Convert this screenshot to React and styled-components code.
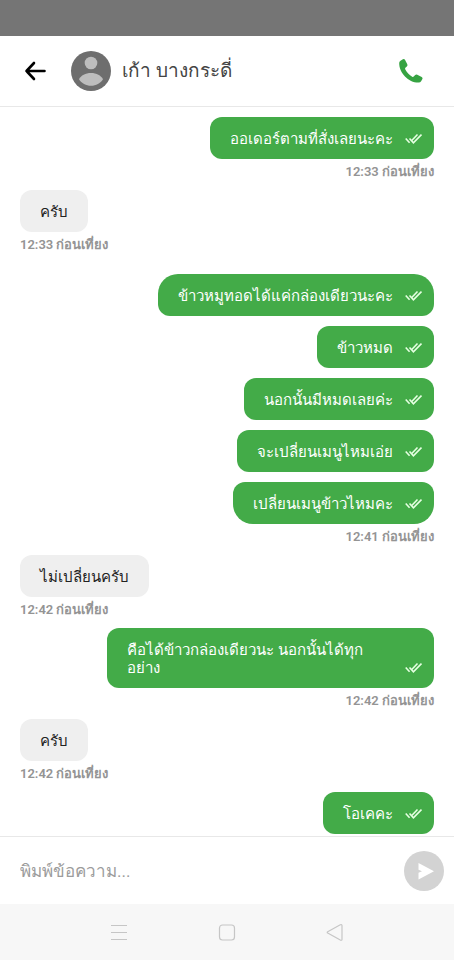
import React from "react";
import styled, { createGlobalStyle } from "styled-components";

const GlobalStyle = createGlobalStyle`
  * { box-sizing: border-box; }
  body { margin: 0; background: #fff; }
  button, input { font: inherit; }
`;

const Screen = styled.div`
  display: flex;
  flex-direction: column;
  min-height: 100vh;
  background: #fff;
  font-family: Roboto, "Liberation Sans", sans-serif;
`;

const StatusBar = styled.div`
  height: 36px;
  background: #757575;
`;

const Header = styled.header`
  display: flex;
  align-items: center;
  height: 71px;
  padding: 0 28px 0 20px;
  border-bottom: 1px solid #e8e8e8;
`;

const IconButton = styled.button`
  display: grid;
  place-items: center;
  padding: 0;
  border: 0;
  background: none;
  color: ${(p) => p.$color};
`;

const Avatar = styled.svg`
  width: 40px;
  height: 40px;
  margin: 0 11px 0 21px;
`;

const Name = styled.h1`
  flex: 1;
  margin: 0;
  font-size: 19px;
  line-height: 30px;
  font-weight: 400;
  color: #444;
`;

const Messages = styled.main`
  flex: 1;
  display: flex;
  flex-direction: column;
  gap: 10px;
  padding: 10px 20px 2px;
`;

const Message = styled.article`
  display: flex;
  flex-direction: column;
  align-items: ${(p) => (p.$mine ? "flex-end" : "flex-start")};
  margin-bottom: ${(p) => (p.$spaced ? 11 : 0)}px;
`;

const radii = {
  single: "12px",
  first: "20px 20px 12px 12px",
  last: "12px 12px 20px 20px",
};

const Bubble = styled.div`
  display: flex;
  align-items: flex-end;
  gap: 12px;
  max-width: 79%;
  padding: 13px ${(p) => (p.$mine ? 12 : 20)}px 11px 20px;
  border-radius: ${(p) => radii[p.$shape]};
  background: ${(p) => (p.$mine ? "#43ab48" : "#efefef")};
  color: ${(p) => (p.$mine ? "#fff" : "#222")};
`;

const Text = styled.p`
  margin: 0;
  font-size: 15px;
  line-height: 18px;
`;

const Ticks = styled.svg`
  flex: none;
  width: 17px;
  height: 17px;
`;

const Time = styled.time`
  height: 21px;
  padding-top: 4px;
  font-size: 13px;
  line-height: 17px;
  font-weight: 600;
  color: #949494;
`;

const Composer = styled.form`
  display: flex;
  align-items: center;
  gap: 12px;
  height: 68px;
  padding: 0 10px 0 20px;
  border-top: 1px solid #e8e8e8;
`;

const Field = styled.input`
  flex: 1;
  min-width: 0;
  height: 40px;
  padding: 0;
  border: 0;
  outline: 0;
  background: none;
  font-size: 17px;
  color: #222;
  &::placeholder { color: #9c9c9c; opacity: 1; }
`;

const Send = styled(IconButton)`
  width: 40px;
  height: 40px;
  border-radius: 50%;
  background: #d3d3d3;
`;

const SystemNav = styled.nav`
  display: flex;
  align-items: center;
  justify-content: center;
  gap: 84px;
  height: 56px;
  background: #f7f7f7;
`;

const messages = [
  { mine: true, text: "ออเดอร์ตามที่สั่งเลยนะคะ", time: "12:33 ก่อนเที่ยง" },
  { text: "ครับ", time: "12:33 ก่อนเที่ยง", spaced: true },
  { mine: true, text: "ข้าวหมูทอดได้แค่กล่องเดียวนะคะ", shape: "first" },
  { mine: true, text: "ข้าวหมด" },
  { mine: true, text: "นอกนั้นมีหมดเลยค่ะ" },
  { mine: true, text: "จะเปลี่ยนเมนูไหมเอ่ย" },
  { mine: true, text: "เปลี่ยนเมนูข้าวไหมคะ", time: "12:41 ก่อนเที่ยง", shape: "last" },
  { text: "ไม่เปลี่ยนครับ", time: "12:42 ก่อนเที่ยง" },
  { mine: true, text: "คือได้ข้าวกล่องเดียวนะ นอกนั้นได้ทุกอย่าง", time: "12:42 ก่อนเที่ยง" },
  { text: "ครับ", time: "12:42 ก่อนเที่ยง" },
  { mine: true, text: "โอเคคะ" },
];

export default function App() {
  return (
    <Screen lang="th">
      <GlobalStyle />
      <StatusBar />
      <Header>
        <IconButton type="button" aria-label="ย้อนกลับ" $color="#000">
          <svg width="30" height="30" viewBox="0 0 30 30" fill="none" stroke="currentColor" strokeWidth="2.6" strokeLinecap="round" strokeLinejoin="round">
            <path d="M24.5 15H6.5M14 7L6.500 15L14 23" />
          </svg>
        </IconButton>
        <Avatar viewBox="0 0 40 40" aria-hidden="true">
          <circle cx="20" cy="20" r="20" fill="#6e6e6e" />
          <circle cx="20" cy="12" r="6.300" fill="#bdbdbd" />
          <path d="M8 28.200C10 24.500 14.500 22 20 22S30 24.500 32 28.200C29.500 32.300 25 34.700 20 34.700S10.500 32.300 8 28.200Z" fill="#bdbdbd" />
        </Avatar>
        <Name>เก้า บางกระดี่</Name>
        <IconButton type="button" aria-label="โทร" $color="#36a342">
          <svg width="30" height="30" viewBox="0 0 30 30" fill="currentColor">
            <path d="M4.500 4.700L6.900 3.300Q8.300 2.600 9.100 4L11.300 8.300Q11.900 9.600 10.800 10.500L9.400 11.800Q8.800 12.500 9.200 13.300C10.800 16.300 13.200 18.900 16.200 20.700Q17 21.200 17.700 20.500L19.200 19Q20.100 18.100 21.300 18.700L25.700 20.900Q27.100 21.700 26.400 23L25.100 25.200Q24.300 26.500 22.800 26.600C13 27 3 17 3.200 7Q3.200 5.500 4.500 4.700Z" />
          </svg>
        </IconButton>
      </Header>
      <Messages>
        {messages.map((m, i) => (
          <Message key={i} $mine={m.mine} $spaced={m.spaced}>
            <Bubble $mine={m.mine} $shape={m.shape || "single"}>
              <Text>{m.text}</Text>
              {m.mine && (
                <Ticks viewBox="0 0 17 17" fill="none" stroke="#e6ffe2" strokeWidth="1.600" role="img" aria-label="อ่านแล้ว">
                  <path d="M4.500 7.500L8.400 11.800L16.500 3.500M.7 7.500L4.600 11.800M7 9.300L12.500 3.500" />
                </Ticks>
              )}
            </Bubble>
            {m.time && <Time>{m.time}</Time>}
          </Message>
        ))}
      </Messages>
      <Composer onSubmit={(e) => e.preventDefault()}>
        <Field type="text" aria-label="พิมพ์ข้อความ" placeholder="พิมพ์ข้อความ..." />
        <Send type="submit" aria-label="ส่ง" $color="#fff">
          <svg width="20" height="20" viewBox="0 0 20 20" fill="currentColor">
            <path d="M4.500 2L20 10.200L4.500 18.500V11.800L8 10.200L4.500 8.700Z" />
          </svg>
        </Send>
      </Composer>
      <SystemNav>
        <IconButton type="button" aria-label="แอปล่าสุด" $color="#c6c6c6">
          <svg width="24" height="24" viewBox="0 0 24 24" fill="none" stroke="currentColor" strokeWidth="1.200">
            <path d="M4 5.500H20M4 12.500H20M4 19.500H20" />
          </svg>
        </IconButton>
        <IconButton type="button" aria-label="หน้าหลัก" $color="#c6c6c6">
          <svg width="24" height="24" viewBox="0 0 24 24" fill="none" stroke="currentColor" strokeWidth="1.200">
            <rect x="4.500" y="5" width="15" height="15" rx="3" />
          </svg>
        </IconButton>
        <IconButton type="button" aria-label="กลับ" $color="#c6c6c6">
          <svg width="24" height="24" viewBox="0 0 24 24" fill="none" stroke="currentColor" strokeWidth="1.200" strokeLinejoin="round">
            <path d="M17.300 4.800L4.700 11.700Q3.700 12.400 4.700 13.100L17.300 20.100Q19 20.700 19 19.200V5.700Q19 4.200 17.300 4.800Z" />
          </svg>
        </IconButton>
      </SystemNav>
    </Screen>
  );
}
